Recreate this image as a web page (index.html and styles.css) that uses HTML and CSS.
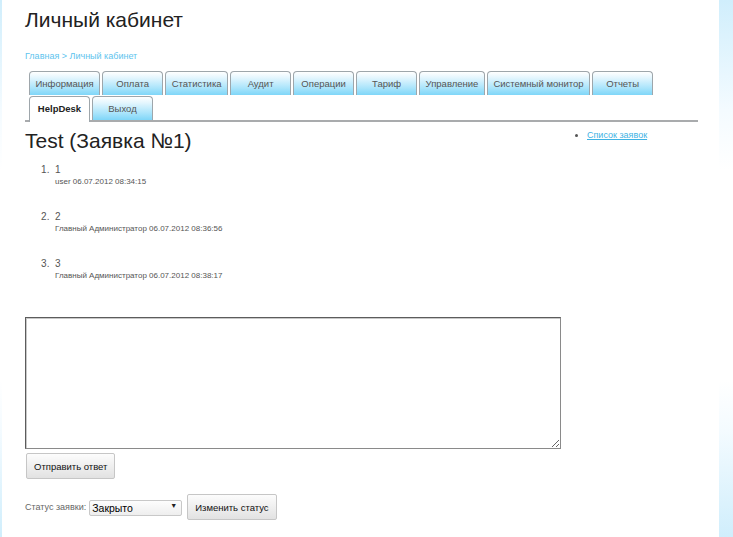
FILE: index.html
```html
<!DOCTYPE html>
<html lang="ru">
<head>
<meta charset="utf-8">
<title>Личный кабинет</title>
<link rel="stylesheet" href="styles.css">
</head>
<body>
<div class="page">
  <header class="head">
    <h1 class="site-title">Личный кабинет</h1>
    <div class="crumbs"><a href="#">Главная</a> &gt; <a href="#">Личный кабинет</a></div>
  </header>

  <nav class="tabs">
    <a class="tab" href="#">Информация</a>
    <a class="tab" href="#">Оплата</a>
    <a class="tab" href="#">Статистика</a>
    <a class="tab" href="#">Аудит</a>
    <a class="tab" href="#">Операции</a>
    <a class="tab" href="#">Тариф</a>
    <a class="tab" href="#">Управление</a>
    <a class="tab" href="#">Системный монитор</a>
    <a class="tab" href="#">Отчеты</a>
    <a class="tab tab-active" href="#">HelpDesk</a>
    <a class="tab" href="#">Выход</a>
  </nav>

  <div class="content">
    <main class="main">
      <h2 class="ticket-title">Test (Заявка №1)</h2>
      <ol class="messages">
        <li>
          <div class="msg-text">1</div>
          <div class="msg-meta">user 06.07.2012 08:34:15</div>
        </li>
        <li>
          <div class="msg-text">2</div>
          <div class="msg-meta">Главный Администратор 06.07.2012 08:36:56</div>
        </li>
        <li>
          <div class="msg-text">3</div>
          <div class="msg-meta">Главный Администратор 06.07.2012 08:38:17</div>
        </li>
      </ol>

      <form class="reply">
        <textarea class="reply-text"></textarea>
        <button type="button" class="btn btn-send">Отправить ответ</button>
      </form>

      <form class="status">
        <label class="status-label">Статус заявки:</label>
        <span class="select-wrap">
          <select class="status-select">
            <option>Закрыто</option>
            <option>Открыто</option>
          </select>
        </span>
        <button type="button" class="btn btn-status">Изменить статус</button>
      </form>
    </main>

    <aside class="side">
      <ul class="side-links">
        <li><a href="#">Список заявок</a></li>
      </ul>
    </aside>
  </div>
</div>
</body>
</html>
```
FILE: styles.css
```css
html, body {
  margin: 0;
  height: 100%;
}

body {
  background: linear-gradient(#d0eefc 0, #f4fbff 110px, #fff 170px, #fff 380px, #f4fbff 430px, #d0eefc 537px);
  font-family: "Liberation Sans", Arial, sans-serif;
  color: #222;
}

.page {
  width: 717px;
  min-height: 100%;
  margin-left: 2px;
  background: #fff;
  box-sizing: border-box;
  padding: 0 21px 0 23px;
}

/* header */
.head {
  padding-top: 8px;
}

.site-title {
  margin: 0;
  font-size: 21px;
  line-height: 24px;
  font-weight: normal;
  color: #222;
}

.crumbs {
  margin-top: 18px;
  font-size: 9px;
  line-height: 12px;
  color: #5ec4ee;
}

.crumbs a {
  color: #5ec4ee;
  text-decoration: none;
}

/* tab strip */
.tabs {
  margin-top: 9px;
  display: flex;
  flex-wrap: wrap;
  column-gap: 2px;
  row-gap: 1px;
  padding-left: 4px;
  border-bottom: 2px solid #a9abad;
}

.tab {
  box-sizing: border-box;
  height: 24px;
  min-width: 61px;
  padding: 0 5.5px;
  border: 1px solid #9ea6ab;
  border-bottom: none;
  border-radius: 4px 4px 0 0;
  background: linear-gradient(#ffffff 0%, #e4f6fe 25%, #a9e4fb 70%, #7fd6f8 100%);
  color: #555;
  font-size: 9.5px;
  line-height: 24px;
  text-align: center;
  text-decoration: none;
  white-space: nowrap;
}

.tab-active {
  background: #fff;
  color: #222;
  font-weight: bold;
  height: 26px;
  margin-bottom: -2px;
  position: relative;
}

/* content area */
.content {
  display: flex;
  padding-top: 6px;
}

.main {
  flex: 0 0 535px;
}

.ticket-title {
  margin: 0;
  font-size: 21px;
  line-height: 26px;
  font-weight: normal;
  color: #222;
}

.messages {
  margin: 9px 0 0;
  padding-left: 30px;
  font-size: 10px;
  color: #555;
}

.messages li {
  margin-bottom: 22px;
}

.messages li::marker {
  content: counter(list-item) ".  ";
}

.msg-text {
  line-height: 13px;
}

.msg-meta {
  font-size: 8px;
  line-height: 12px;
  color: #555;
}

.reply {
  margin-top: 35px;
}

.reply-text {
  display: block;
  box-sizing: border-box;
  width: 536px;
  height: 132px;
  margin: 0;
  border: 1px solid #5c5c5c;
  border-right-color: #8a8a8a;
  border-bottom-color: #8a8a8a;
  box-shadow: inset 1px 1px 0 #c8c8c8;
  resize: both;
  font-family: inherit;
}

.btn {
  box-sizing: border-box;
  height: 26px;
  padding: 0 7px;
  border: 1px solid #c6c6c6;
  border-radius: 2px;
  background: linear-gradient(#fcfcfc, #e2e2e2);
  font-family: inherit;
  font-size: 9.5px;
  color: #111;
  white-space: nowrap;
}

.btn-send {
  margin: 4px 0 0 1px;
}

.status {
  margin-top: 15px;
  display: flex;
  align-items: center;
}

.status-label {
  font-size: 9px;
  color: #666;
  margin-right: 3px;
}

.select-wrap {
  position: relative;
  display: inline-block;
}

.select-wrap::after {
  content: "▼";
  position: absolute;
  right: 5px;
  top: 4px;
  font-size: 7px;
  color: #222;
  pointer-events: none;
}

.status-select {
  appearance: none;
  -webkit-appearance: none;
  box-sizing: border-box;
  width: 93px;
  height: 16px;
  padding: 0 0 0 2px;
  border: 1px solid #c8c8c8;
  border-radius: 2px;
  background: linear-gradient(#fdfdfd, #eeeeee);
  font-family: inherit;
  font-size: 10.5px;
  color: #000;
}

.btn-status {
  margin-left: 5px;
}

/* sidebar */
.side {
  flex: 1;
}

.side-links {
  margin: 1px 0 0;
  padding-left: 26px;
  font-size: 9px;
  line-height: 12px;
  color: #555;
}

.side-links a {
  color: #3fb3e4;
}
```
